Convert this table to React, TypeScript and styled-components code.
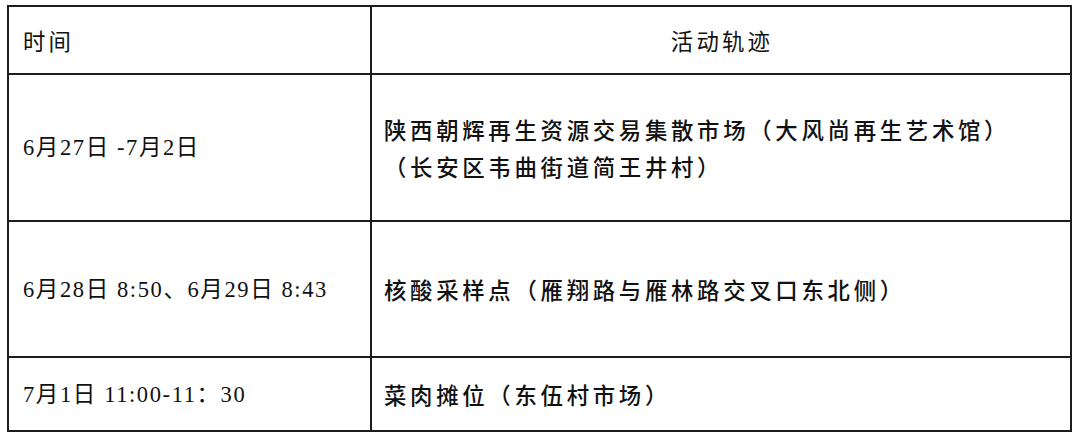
import styled, { createGlobalStyle } from "styled-components";

const GlobalStyle = createGlobalStyle`
  html, body {
    margin: 0;
    padding: 0;
    background: #ffffff;
  }
  body {
    font-family: "Noto Sans CJK SC", "Noto Sans", sans-serif;
    color: #111111;
  }
`;

const Page = styled.div`
  padding: 5px 8px 8px 7px;
`;

const Table = styled.table`
  width: 1065px;
  border-collapse: collapse;
  border: 2px solid #1c1c1c;
  table-layout: fixed;
`;

const Row = styled.tr<{ $h: number }>`
  height: ${(p) => p.$h}px;
`;

const Cell = styled.td<{ $center?: boolean; $serif?: boolean }>`
  border: 2px solid #1c1c1c;
  padding: 0 12px 0 ${(p) => (p.$serif ? "14px" : "12px")};
  vertical-align: middle;
  text-align: ${(p) => (p.$center ? "center" : "left")};
  font-family: ${(p) =>
    p.$serif
      ? '"Liberation Serif", "Noto Sans CJK SC", serif'
      : '"Noto Sans CJK SC", "Noto Sans", sans-serif'};
  font-size: ${(p) => (p.$serif ? "22.5px" : "22.4px")};
  font-weight: ${(p) => (p.$serif ? 400 : 500)};
  letter-spacing: ${(p) => (p.$serif ? "1.6px" : "3.7px")};
  line-height: 37px;
  color: #111111;
`;

const HeadCell = styled(Cell)`
  font-weight: 400;
  letter-spacing: 3.2px;
  padding-left: 14px;
`;

const TimeCol = styled.col`
  width: 363px;
`;

interface Entry {
  time: string;
  place: string[];
  height: number;
}

const entries: Entry[] = [
  {
    time: "6月27日 -7月2日",
    place: ["陕西朝辉再生资源交易集散市场（大风尚再生艺术馆）", "（长安区韦曲街道简王井村）"],
    height: 147,
  },
  {
    time: "6月28日 8:50、6月29日 8:43",
    place: ["核酸采样点（雁翔路与雁林路交叉口东北侧）"],
    height: 136,
  },
  {
    time: "7月1日 11:00-11：30",
    place: ["菜肉摊位（东伍村市场）"],
    height: 74,
  },
];

export default function App() {
  return (
    <>
      <GlobalStyle />
      <Page>
        <Table>
          <colgroup>
            <TimeCol />
            <col />
          </colgroup>
          <tbody>
            <Row $h={68}>
              <HeadCell>时间</HeadCell>
              <HeadCell $center>活动轨迹</HeadCell>
            </Row>
            {entries.map((e) => (
              <Row $h={e.height} key={e.time}>
                <Cell $serif>{e.time}</Cell>
                <Cell>
                  {e.place.map((line) => (
                    <div key={line}>{line}</div>
                  ))}
                </Cell>
              </Row>
            ))}
          </tbody>
        </Table>
      </Page>
    </>
  );
}
